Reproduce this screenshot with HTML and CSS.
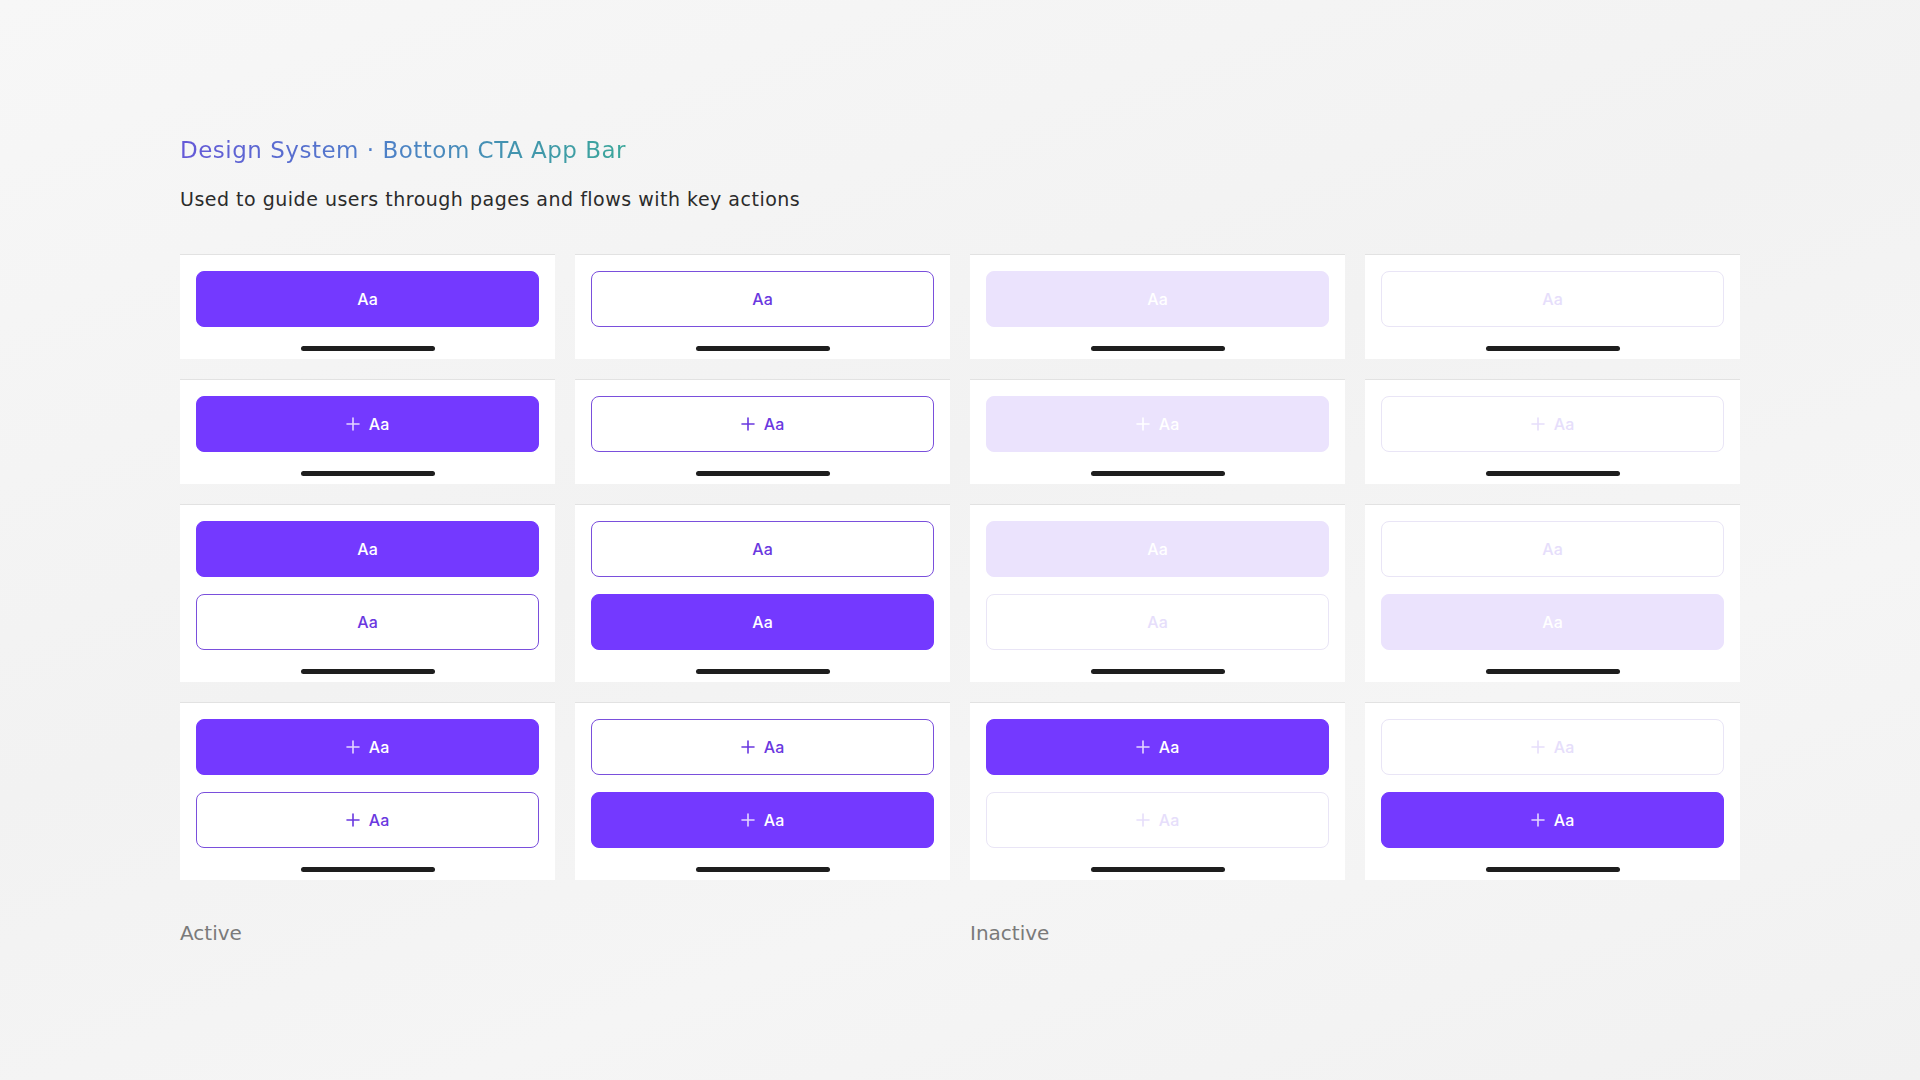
FILE: index.html
```html
<!DOCTYPE html>
<html lang="en">
<head>
<meta charset="utf-8">
<title>Design System · Bottom CTA App Bar</title>
<link rel="stylesheet" href="styles.css">
</head>
<body>
<main class="page">
  <header class="header">
    <h1 class="title">Design System · Bottom CTA App Bar</h1>
    <p class="subtitle">Used to guide users through pages and flows with key actions</p>
  </header>

  <section class="grid">
    <!-- Row 1 -->
    <div class="card"><div class="btns"><button class="btn primary">Aa</button></div><div class="home"><span class="bar"></span></div></div>
    <div class="card"><div class="btns"><button class="btn outline">Aa</button></div><div class="home"><span class="bar"></span></div></div>
    <div class="card"><div class="btns"><button class="btn dis-fill">Aa</button></div><div class="home"><span class="bar"></span></div></div>
    <div class="card"><div class="btns"><button class="btn dis-outline">Aa</button></div><div class="home"><span class="bar"></span></div></div>

    <!-- Row 2 -->
    <div class="card"><div class="btns"><button class="btn primary"><svg class="plus" viewBox="0 0 14 14"><path d="M7 1v12M1 7h12"/></svg>Aa</button></div><div class="home"><span class="bar"></span></div></div>
    <div class="card"><div class="btns"><button class="btn outline"><svg class="plus" viewBox="0 0 14 14"><path d="M7 1v12M1 7h12"/></svg>Aa</button></div><div class="home"><span class="bar"></span></div></div>
    <div class="card"><div class="btns"><button class="btn dis-fill"><svg class="plus" viewBox="0 0 14 14"><path d="M7 1v12M1 7h12"/></svg>Aa</button></div><div class="home"><span class="bar"></span></div></div>
    <div class="card"><div class="btns"><button class="btn dis-outline"><svg class="plus" viewBox="0 0 14 14"><path d="M7 1v12M1 7h12"/></svg>Aa</button></div><div class="home"><span class="bar"></span></div></div>

    <!-- Row 3 -->
    <div class="card"><div class="btns"><button class="btn primary">Aa</button><button class="btn outline">Aa</button></div><div class="home"><span class="bar"></span></div></div>
    <div class="card"><div class="btns"><button class="btn outline">Aa</button><button class="btn primary">Aa</button></div><div class="home"><span class="bar"></span></div></div>
    <div class="card"><div class="btns"><button class="btn dis-fill">Aa</button><button class="btn dis-outline">Aa</button></div><div class="home"><span class="bar"></span></div></div>
    <div class="card"><div class="btns"><button class="btn dis-outline">Aa</button><button class="btn dis-fill">Aa</button></div><div class="home"><span class="bar"></span></div></div>

    <!-- Row 4 -->
    <div class="card"><div class="btns"><button class="btn primary"><svg class="plus" viewBox="0 0 14 14"><path d="M7 1v12M1 7h12"/></svg>Aa</button><button class="btn outline"><svg class="plus" viewBox="0 0 14 14"><path d="M7 1v12M1 7h12"/></svg>Aa</button></div><div class="home"><span class="bar"></span></div></div>
    <div class="card"><div class="btns"><button class="btn outline"><svg class="plus" viewBox="0 0 14 14"><path d="M7 1v12M1 7h12"/></svg>Aa</button><button class="btn primary"><svg class="plus" viewBox="0 0 14 14"><path d="M7 1v12M1 7h12"/></svg>Aa</button></div><div class="home"><span class="bar"></span></div></div>
    <div class="card"><div class="btns"><button class="btn primary"><svg class="plus" viewBox="0 0 14 14"><path d="M7 1v12M1 7h12"/></svg>Aa</button><button class="btn dis-outline"><svg class="plus" viewBox="0 0 14 14"><path d="M7 1v12M1 7h12"/></svg>Aa</button></div><div class="home"><span class="bar"></span></div></div>
    <div class="card"><div class="btns"><button class="btn dis-outline"><svg class="plus" viewBox="0 0 14 14"><path d="M7 1v12M1 7h12"/></svg>Aa</button><button class="btn primary"><svg class="plus" viewBox="0 0 14 14"><path d="M7 1v12M1 7h12"/></svg>Aa</button></div><div class="home"><span class="bar"></span></div></div>
  </section>

  <footer class="labels">
    <span class="label">Active</span>
    <span class="label">Inactive</span>
  </footer>
</main>
</body>
</html>
```

FILE: styles.css
```css
* { box-sizing: border-box; }

html, body {
  margin: 0;
  padding: 0;
}

body {
  width: 1920px;
  height: 1080px;
  overflow: hidden;
  background: linear-gradient(160deg, #f7f7f7 0%, #f2f2f2 45%, #f5f5f5 70%, #f1f1f1 100%);
  font-family: "DejaVu Sans", "Open Sans", sans-serif;
}

.page {
  padding: 135px 180px 0 180px;
}

.header {
  display: flex;
  flex-direction: column;
  gap: 21px;
}

.title {
  margin: 0;
  font-size: 23px;
  line-height: 30px;
  font-weight: 400;
  letter-spacing: 0.5px;
  background: linear-gradient(90deg, #6558d8 0%, #4d7fc8 45%, #3aa69a 100%);
  -webkit-background-clip: text;
  background-clip: text;
  color: transparent;
  width: max-content;
}

.subtitle {
  margin: 0;
  font-size: 19px;
  line-height: 26px;
  font-weight: 400;
  letter-spacing: 0.5px;
  color: #2b2b2b;
}

.grid {
  margin-top: 42px;
  display: grid;
  grid-template-columns: repeat(4, 375px);
  column-gap: 20px;
  row-gap: 20px;
  align-items: start;
}

.card {
  background: #ffffff;
  border-top: 1px solid #e2e2e2;
  padding: 16px 16px 0 16px;
  display: flex;
  flex-direction: column;
}

.btns {
  display: flex;
  flex-direction: column;
  gap: 17px;
}

.btn {
  height: 56px;
  width: 100%;
  border-radius: 8px;
  border: 1px solid transparent;
  display: flex;
  align-items: center;
  justify-content: center;
  gap: 9px;
  font-family: Inter, "Liberation Sans", sans-serif;
  font-size: 16px;
  font-weight: 500;
  padding: 0;
  cursor: pointer;
}

.plus {
  width: 14px;
  height: 14px;
  fill: none;
  stroke: currentColor;
  stroke-width: 1.6;
  stroke-linecap: round;
}

.primary {
  background: #7439ff;
  border-color: #7439ff;
  color: #ffffff;
}
.primary .plus { stroke: #e4d6ff; }

.outline {
  background: #ffffff;
  border-color: #7a4fdc;
  color: #6a38e0;
}

.dis-fill {
  background: #ebe3fd;
  border-color: #ebe3fd;
  color: #ffffff;
}

.dis-outline {
  background: #ffffff;
  border-color: #e9e5f6;
  color: #e6defb;
}

.home {
  height: 32px;
  display: flex;
  justify-content: center;
  align-items: flex-end;
  padding-bottom: 8px;
}

.bar {
  width: 134px;
  height: 5px;
  border-radius: 3px;
  background: #1e1e1e;
}

.labels {
  margin-top: 39px;
  display: grid;
  grid-template-columns: 790px 790px;
}

.label {
  font-size: 20px;
  line-height: 28px;
  color: #7a7a7a;
}
```
